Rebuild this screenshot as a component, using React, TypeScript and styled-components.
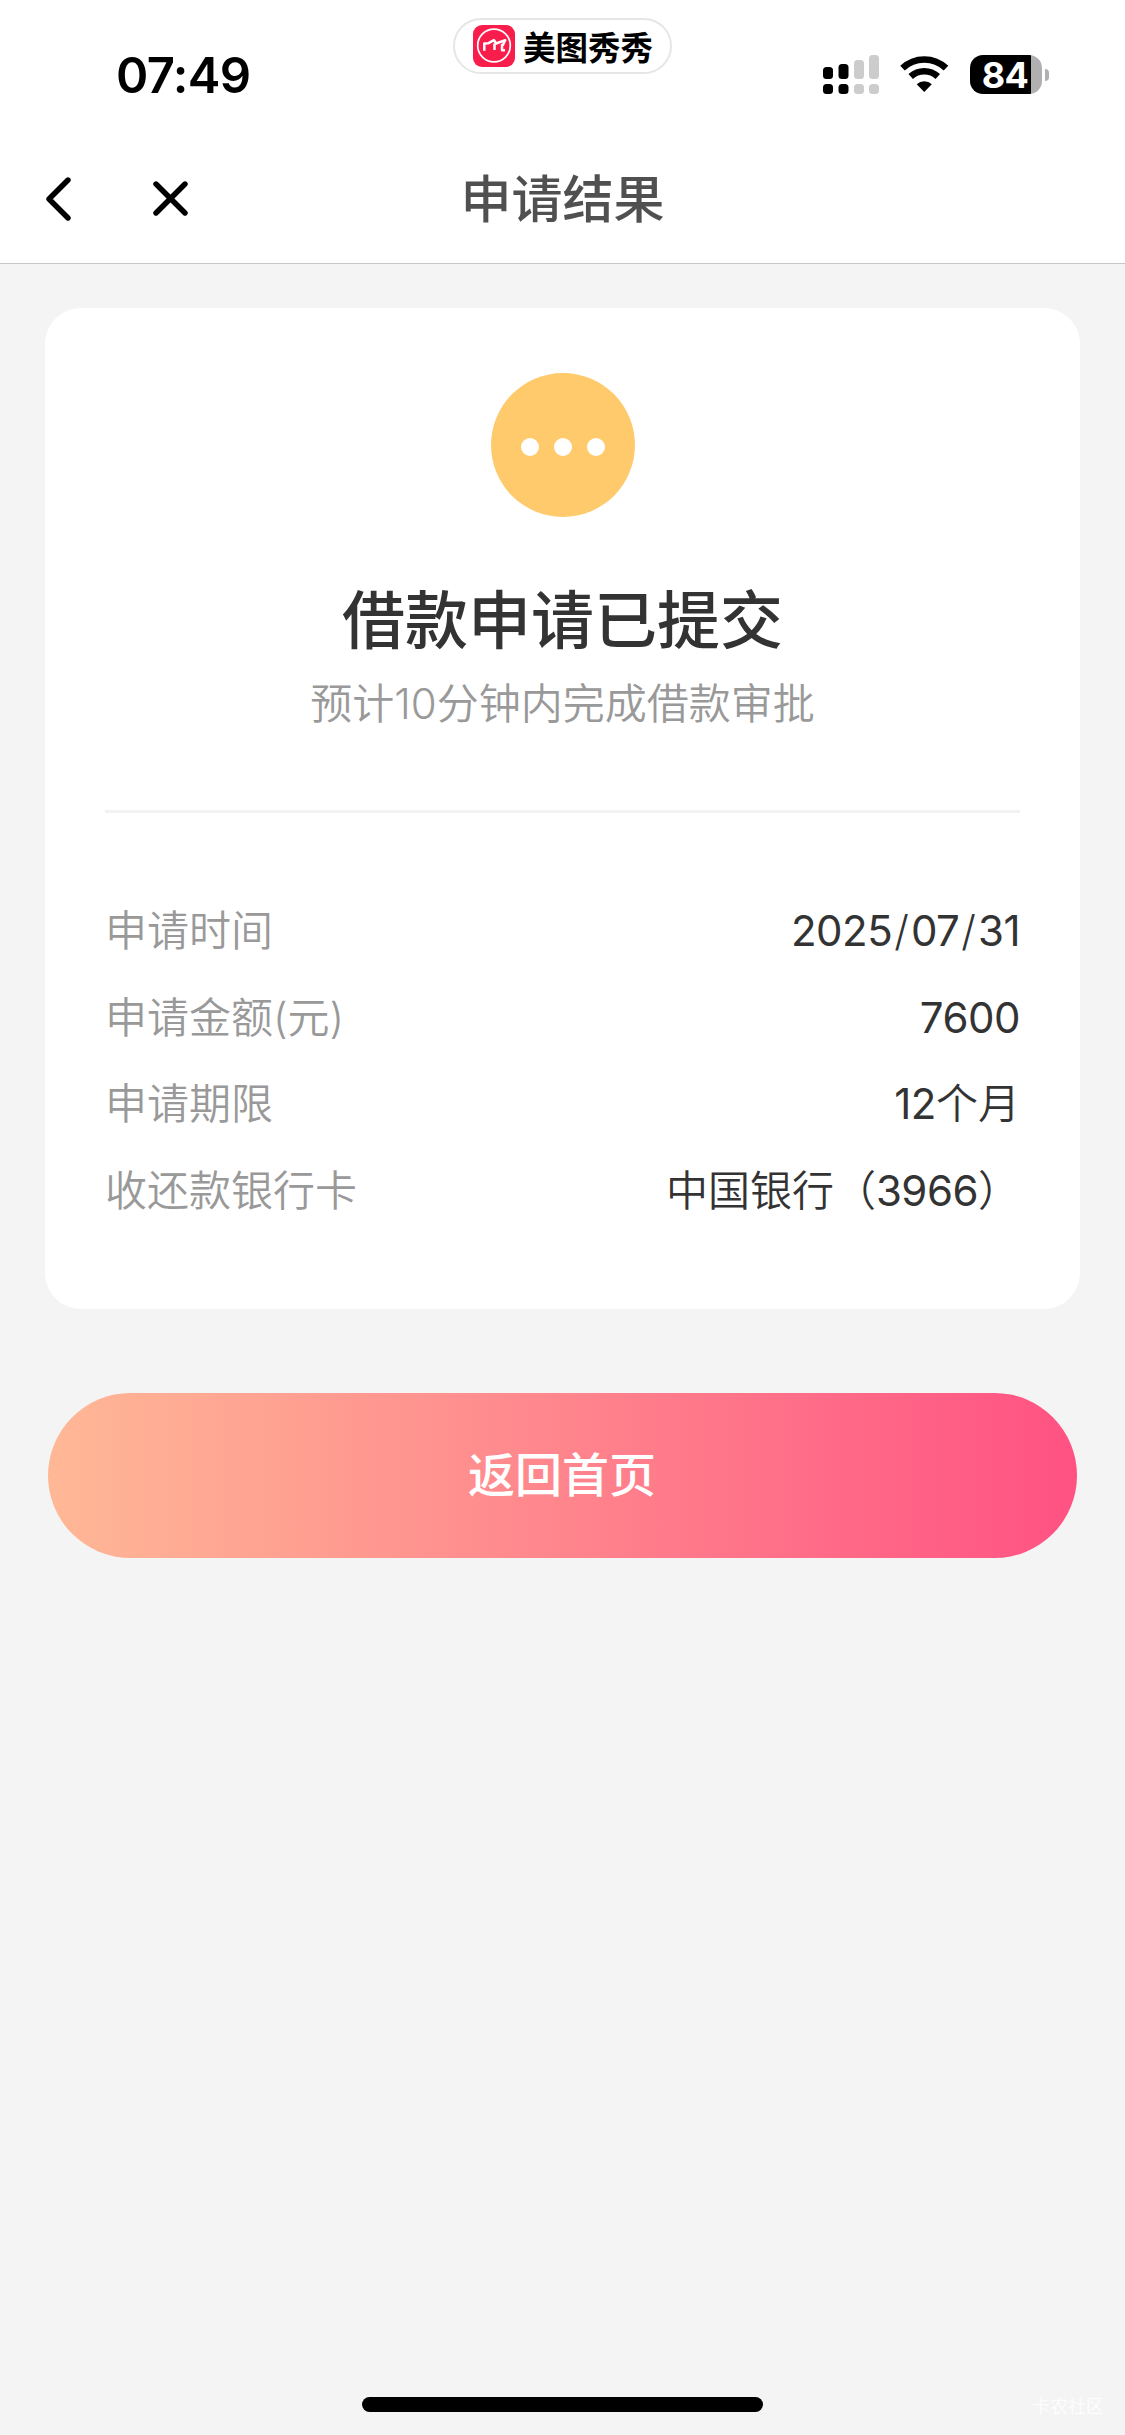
import React from "react";
import styled, { createGlobalStyle } from "styled-components";

const GlobalStyle = createGlobalStyle`
  * { box-sizing: border-box; }
  body {
    margin: 0;
    background: #f4f4f4;
    font-family: Inter, "Noto Sans CJK SC", sans-serif;
  }
`;

const Screen = styled.div`
  width: 1125px;
  height: 2435px;
  display: flex;
  flex-direction: column;
  background: #f4f4f4;
  overflow: hidden;
`;

const Header = styled.header`
  height: 264px;
  background: #fff;
  border-bottom: 1px solid #c6c6c6;
`;

const StatusBar = styled.div`
  height: 134px;
  display: grid;
  grid-template-columns: 453px 219px 1fr;
  align-items: start;
`;

const Time = styled.div`
  padding: 46px 0 0 116px;
  font-size: 49px;
  line-height: 60px;
  font-weight: 600;
  letter-spacing: -0.6px;
  color: #000;
`;

const AppPill = styled.div`
  margin-top: 18px;
  height: 56px;
  display: flex;
  align-items: center;
  gap: 8px;
  border: 2px solid #e6e6e6;
  border-radius: 28px;
  padding-left: 18px;
  white-space: nowrap;
`;

const PillName = styled.span`
  font: 700 32.5px/50px "Noto Sans CJK SC", sans-serif;
  color: #000;
`;

const StatusIcons = styled.div`
  padding: 55px 0 0 151px;
  display: flex;
  align-items: flex-start;
`;

const WifiIcon = styled.svg`
  margin-left: 21px;
`;

const Battery = styled.div`
  margin-left: 21px;
  width: 72px;
  height: 39px;
  border-radius: 13px;
  padding-right: 2px;
  background: linear-gradient(90deg, #000 61px, #b0b0b0 61px);
  color: #fff;
  font-size: 36px;
  line-height: 40px;
  font-weight: 700;
  letter-spacing: -0.6px;
  text-align: center;
`;

const BatteryCap = styled.div`
  margin: 14px 0 0 3px;
  width: 4px;
  height: 12px;
  border-radius: 0 5px 5px 0;
  background: #b0b0b0;
`;

const NavBar = styled.nav`
  height: 129px;
  display: grid;
  grid-template-columns: 300px 1fr 300px;
  align-items: center;
`;

const NavActions = styled.div`
  display: flex;
  align-items: center;
  gap: 82px;
  padding-left: 46px;
`;

const Title = styled.h1`
  margin: 0;
  padding-top: 2px;
  text-align: center;
  font-size: 51px;
  line-height: 60px;
  font-weight: 500;
  color: #505050;
`;

const Card = styled.main`
  margin: 44px 45px 0;
  height: 1001px;
  padding: 65px 60px 0;
  border-radius: 36px;
  background: #fff;
  display: flex;
  flex-direction: column;
  align-items: center;
`;

const PendingBadge = styled.div`
  width: 144px;
  height: 144px;
  padding-top: 4px;
  border-radius: 50%;
  background: #ffca6b;
  display: flex;
  align-items: center;
  justify-content: center;
  gap: 15px;
`;

const Dot = styled.i`
  width: 18px;
  height: 18px;
  border-radius: 50%;
  background: #fff;
`;

const Heading = styled.h2`
  margin: 59px 0 0;
  font-size: 63px;
  line-height: 88px;
  font-weight: 500;
  color: #333;
`;

const Subtitle = styled.p`
  margin: 10px 0 0;
  font-size: 42px;
  line-height: 60px;
  font-weight: 350;
  color: #999;
`;

const Divider = styled.hr`
  width: 100%;
  height: 3px;
  margin: 76px 0 0;
  border: 0;
  background: #f2f2f2;
`;

const Details = styled.dl`
  width: 100%;
  margin: 75px 0 0;
`;

const DetailRow = styled.div`
  height: 86.5px;
  display: flex;
  justify-content: space-between;
  font-size: 42px;
  line-height: 86px;
  font-weight: 350;
`;

const Label = styled.dt`
  color: #999;
`;

const Value = styled.dd`
  margin: 0;
  color: #333;
`;

const Digits = styled.span`
  font-weight: 380;
  letter-spacing: -0.5px;
`;

const Slash = styled.span`
  padding: 0 2px;
`;

const HomeButton = styled.button`
  margin: 84px 48px 0;
  height: 165px;
  padding: 0 1px 7px 0;
  flex: none;
  border: 0;
  border-radius: 83px;
  background: linear-gradient(90deg, #ffb896, #ff5283);
  color: #fff;
  font: 500 47px/60px "Noto Sans CJK SC", sans-serif;
`;

const Footer = styled.footer`
  margin-top: auto;
  height: 50px;
  display: grid;
  grid-template-columns: 362px 401px 1fr;
  padding-top: 12px;
`;

const HomeIndicator = styled.div`
  grid-column: 2;
  height: 15px;
  border-radius: 8px;
  background: #000;
`;

const Watermark = styled.span`
  padding-right: 21px;
  text-align: right;
  font: 400 18px/16px "Noto Sans CJK SC", sans-serif;
  color: #fdfdfd;
`;

const details = [
  ["申请时间", "2025/07/31"],
  ["申请金额(元)", "7600"],
  ["申请期限", "12个月"],
  ["收还款银行卡", "中国银行（3966）"],
];

const signal = [
  { x: 0, top: 12, on: true },
  { x: 15.5, top: 9, on: true },
  { x: 31, top: 5, on: false },
  { x: 46, top: 0, on: false },
];

function formatValue(value: string) {
  return value.split(/(\d+|\/)/).map((part, i) => {
    if (part === "/") return <Slash key={i}>{part}</Slash>;
    if (/^\d+$/.test(part)) return <Digits key={i}>{part}</Digits>;
    return part;
  });
}

export default function App() {
  return (
    <Screen>
      <GlobalStyle />
      <Header>
        <StatusBar>
          <Time>07:49</Time>
          <AppPill>
            <svg width="42" height="42" viewBox="0 0 42 42" fill="none">
              <rect width="42" height="42" rx="9" fill="#f91d4c" />
              <circle cx="21" cy="20.5" r="16.3" stroke="#fff" strokeWidth="1.7" />
              <path d="M11.300 25.800v-7.300l4.200-.3 5.500-3 2.200 3.300 9-3.300-2.200 4.500-1 .3v5.300h3M21.500 18.500v6.500" stroke="#fff" strokeWidth="2.500" strokeLinejoin="round" />
            </svg>
            <PillName>美图秀秀</PillName>
          </AppPill>
          <StatusIcons>
            <svg width="56" height="39" viewBox="0 0 56 39">
              {signal.map((bar) => (
                <g key={bar.x} fill={bar.on ? "#000" : "#ccc"}>
                  <rect x={bar.x} y={bar.top} width="10" height={24 - bar.top} rx="3.5" />
                  <rect x={bar.x} y="29" width="10" height="10" rx="3.5" />
                </g>
              ))}
            </svg>
            <WifiIcon width="49" height="39" viewBox="0 0 49 39" fill="none">
              <path d="M2.500 13.200a31.500 31.500 0 0 1 43.500 0M10.700 21.500a20 20 0 0 1 27.100 0" stroke="#000" strokeWidth="6.6" />
              <path d="M16.700 29.200a11.200 11.200 0 0 1 15.100 0L24.250 37z" fill="#000" />
            </WifiIcon>
            <Battery>84</Battery>
            <BatteryCap />
          </StatusIcons>
        </StatusBar>
        <NavBar>
          <NavActions>
            <svg width="25" height="44" viewBox="0 0 25 44" fill="none" stroke="#000" strokeWidth="5.4" strokeLinecap="round" strokeLinejoin="round">
              <path d="M22 3 3 22l19 19" />
            </svg>
            <svg width="35" height="35" viewBox="0 0 35 35" fill="none" stroke="#000" strokeWidth="5.4" strokeLinecap="round">
              <path d="m3 3 29 29M32 3 3 32" />
            </svg>
          </NavActions>
          <Title>申请结果</Title>
        </NavBar>
      </Header>
      <Card>
        <PendingBadge>
          <Dot />
          <Dot />
          <Dot />
        </PendingBadge>
        <Heading>借款申请已提交</Heading>
        <Subtitle>预计10分钟内完成借款审批</Subtitle>
        <Divider />
        <Details>
          {details.map(([label, value]) => (
            <DetailRow key={label}>
              <Label>{label}</Label>
              <Value>{formatValue(value)}</Value>
            </DetailRow>
          ))}
        </Details>
      </Card>
      <HomeButton>返回首页</HomeButton>
      <Footer>
        <HomeIndicator />
        <Watermark>卡农社区</Watermark>
      </Footer>
    </Screen>
  );
}
